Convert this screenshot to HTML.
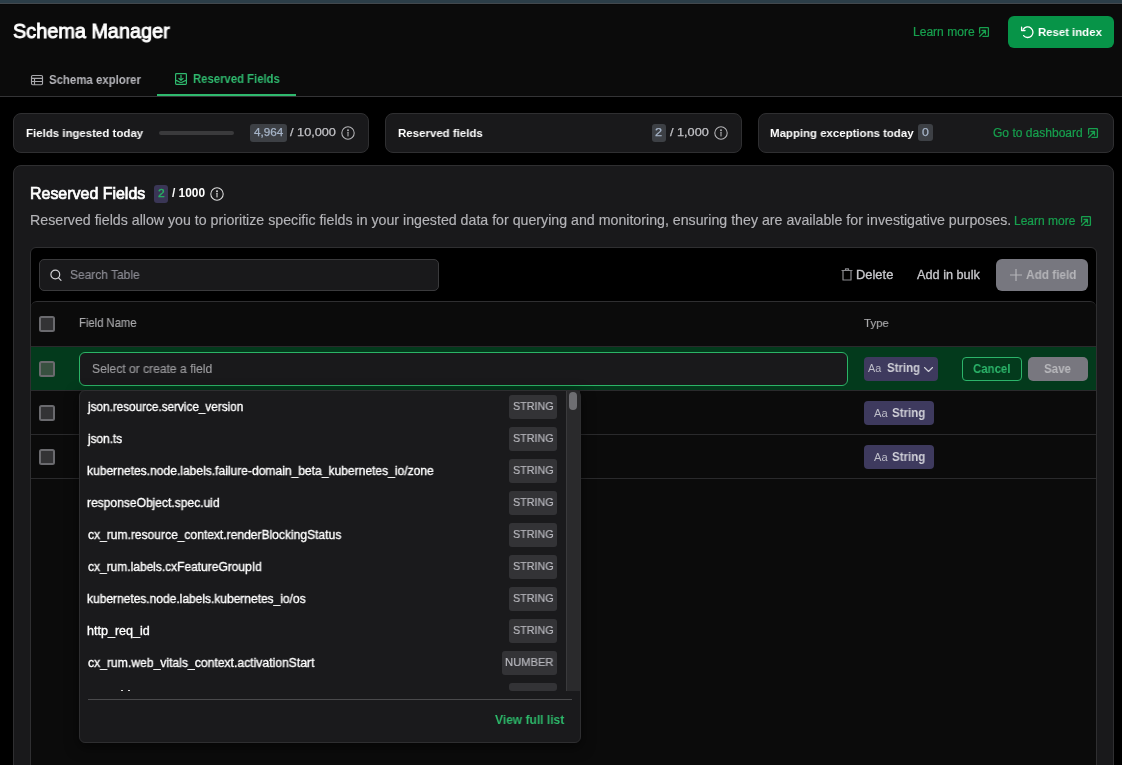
<!DOCTYPE html>
<html><head><meta charset="utf-8">
<style>
*{margin:0;padding:0;box-sizing:border-box}
html,body{width:1122px;height:765px;overflow:hidden;background:#000;font-family:"Liberation Sans",sans-serif}
.a{position:absolute}
.t{position:absolute;line-height:1;white-space:nowrap;transform-origin:0 0;will-change:transform}
svg{position:absolute;overflow:visible}
</style></head>
<body>
<div class="a" style="left:0px;top:0px;width:1122px;height:3px;background:#2c3e48;border-radius:0px;"></div>
<div class="a" style="left:0px;top:3px;width:1122px;height:1px;background:#42484d;border-radius:0px;"></div>
<div class="a" style="left:0px;top:4px;width:1122px;height:1px;background:#080808;border-radius:0px;"></div>
<div class="a" style="left:0px;top:5px;width:1122px;height:91px;background:#0b0b0b;border-radius:0px;"></div>
<div class="a" style="left:0px;top:96px;width:1122px;height:1px;background:#343436;border-radius:0px;"></div>
<div class="t" style="left:13.17px;top:19px;line-height:23px;font-size:20.70px;color:#fff;transform:scaleX(0.9592);-webkit-text-stroke:0.93px #fff;">Schema Manager</div>
<div class="t" style="left:912.54px;top:25px;line-height:14px;font-size:12.00px;color:#17a04e;transform:scaleX(1.0037);-webkit-text-stroke:0.2px #17a04e;">Learn more</div>
<svg style="left:979px;top:27px" width="10" height="10" viewBox="0 0 10 10" fill="none" stroke="#17a04e" stroke-width="1.3" stroke-linecap="round" stroke-linejoin="round"><path d="M0.6 6 V1.2 Q0.6 0.6 1.2 0.6 H8.8 Q9.4 0.6 9.4 1.2 V8.8 Q9.4 9.4 8.8 9.4 H4"/><path d="M0.8 9.2 L6.3 3.7 M3 3.5 H6.5 V7"/></svg>
<div class="a" style="left:1008px;top:16px;width:106px;height:32px;background:#079448;border-radius:6px;"></div>
<svg style="left:1021px;top:26px" width="14" height="13" viewBox="0 0 14 13" fill="none" stroke="#fff" stroke-width="1.3" stroke-linecap="round" stroke-linejoin="round"><path d="M2.3 3.2 A5.3 5.3 0 1 1 2.6 9.6"/><path d="M0.6 1.2 V4.5 H4"/></svg>
<div class="t" style="left:1037.86px;top:25px;line-height:13px;font-size:11.60px;font-weight:bold;color:#fff;transform:scaleX(0.9803);">Reset index</div>
<svg style="left:31px;top:75px" width="12" height="10" viewBox="0 0 12 10" fill="none" stroke="#a8a8ac" stroke-width="1.15"><rect x="0.5" y="0.5" width="11" height="9.2" rx="1.2"/><path d="M0.5 3.3 H11.5 M0.5 6.5 H11.5 M3.5 3.3 V9.7"/></svg>
<div class="t" style="left:48.96px;top:73px;line-height:14px;font-size:11.90px;font-weight:bold;color:#b5b5ba;transform:scaleX(0.9593);">Schema explorer</div>
<svg style="left:175px;top:73px" width="12" height="12" viewBox="0 0 12 12" fill="none" stroke="#2fb96e" stroke-width="1.2" stroke-linecap="round" stroke-linejoin="round"><rect x="0.6" y="0.6" width="10.8" height="10.8" rx="0.8"/><path d="M6 2.3 V7.3 M3.9 5.3 L6 7.4 L8.1 5.3"/><path d="M0.6 7.3 C2.6 7.3 3.6 9.5 6 9.5 C8.4 9.5 9.4 7.3 11.4 7.3"/></svg>
<div class="t" style="left:192.86px;top:72px;line-height:14px;font-size:11.90px;font-weight:bold;color:#2fb96e;transform:scaleX(0.9520);">Reserved Fields</div>
<div class="a" style="left:157px;top:94px;width:139px;height:2px;background:#2fb96e;border-radius:0px;"></div>
<div class="a" style="left:13px;top:113px;width:356px;height:40px;background:#19191b;border:1px solid #2f2f31;border-radius:8px;"></div>
<div class="a" style="left:385px;top:113px;width:357px;height:40px;background:#19191b;border:1px solid #2f2f31;border-radius:8px;"></div>
<div class="a" style="left:758px;top:113px;width:356px;height:40px;background:#19191b;border:1px solid #2f2f31;border-radius:8px;"></div>
<div class="t" style="left:25.75px;top:126px;line-height:13px;font-size:11.60px;font-weight:bold;color:#fff;transform:scaleX(0.9881);">Fields ingested today</div>
<div class="a" style="left:159px;top:131px;width:75px;height:4px;background:#3a3a3c;border-radius:2px;"></div>
<div class="a" style="left:250px;top:124.3px;width:37px;height:17.4px;background:#3d4045;border-radius:3px;"></div>
<div class="t" style="left:253.67px;top:126px;line-height:12px;font-size:11.30px;color:#a6b4c8;transform:scaleX(1.0367);-webkit-text-stroke:0.25px #a6b4c8;">4,964</div>
<div class="t" style="left:290.20px;top:126px;line-height:12px;font-size:11.50px;color:#c2c2c6;transform:scaleX(1.1052);-webkit-text-stroke:0.25px #c2c2c6;">/ 10,000</div>
<svg style="left:341.2px;top:125.69999999999999px" width="14" height="14" viewBox="0 0 14 14" fill="none" stroke="#b5b5b8" stroke-width="1.05" stroke-linecap="round"><circle cx="7" cy="7" r="6.2"/><path d="M7 6.3 V10"/><circle cx="7" cy="4.2" r="0.4" fill="#b5b5b8"/></svg>
<div class="t" style="left:397.85px;top:126px;line-height:13px;font-size:11.60px;font-weight:bold;color:#fff;transform:scaleX(0.9893);">Reserved fields</div>
<div class="a" style="left:652.3px;top:124.2px;width:13.5px;height:17.6px;background:#3d4045;border-radius:3px;"></div>
<div class="t" style="left:655.36px;top:126px;line-height:12px;font-size:11.30px;color:#a6b4c8;transform:scaleX(1.1281);-webkit-text-stroke:0.25px #a6b4c8;">2</div>
<div class="t" style="left:669.90px;top:126px;line-height:12px;font-size:11.50px;color:#c2c2c6;transform:scaleX(1.1028);-webkit-text-stroke:0.25px #c2c2c6;">/ 1,000</div>
<svg style="left:713.9px;top:126px" width="14" height="14" viewBox="0 0 14 14" fill="none" stroke="#b5b5b8" stroke-width="1.05" stroke-linecap="round"><circle cx="7" cy="7" r="6.2"/><path d="M7 6.3 V10"/><circle cx="7" cy="4.2" r="0.4" fill="#b5b5b8"/></svg>
<div class="t" style="left:770.46px;top:126px;line-height:13px;font-size:11.60px;font-weight:bold;color:#fff;transform:scaleX(0.9860);">Mapping exceptions today</div>
<div class="a" style="left:918.2px;top:124.4px;width:14.8px;height:17px;background:#3d4045;border-radius:3px;"></div>
<div class="t" style="left:922.11px;top:126px;line-height:12px;font-size:11.30px;color:#a6b4c8;transform:scaleX(1.0878);-webkit-text-stroke:0.25px #a6b4c8;">0</div>
<div class="t" style="left:993.30px;top:126px;line-height:14px;font-size:12.00px;color:#17a04e;transform:scaleX(1.0043);-webkit-text-stroke:0.2px #17a04e;">Go to dashboard</div>
<svg style="left:1088px;top:128px" width="10" height="10" viewBox="0 0 10 10" fill="none" stroke="#17a04e" stroke-width="1.3" stroke-linecap="round" stroke-linejoin="round"><path d="M0.6 6 V1.2 Q0.6 0.6 1.2 0.6 H8.8 Q9.4 0.6 9.4 1.2 V8.8 Q9.4 9.4 8.8 9.4 H4"/><path d="M0.8 9.2 L6.3 3.7 M3 3.5 H6.5 V7"/></svg>
<div class="a" style="left:13px;top:165px;width:1101px;height:640px;background:#19191b;border:1px solid #2f2f31;border-radius:8px;"></div>
<div class="t" style="left:29.88px;top:185px;line-height:17px;font-size:15.90px;color:#fff;transform:scaleX(1.0039);-webkit-text-stroke:0.72px #fff;">Reserved Fields</div>
<div class="a" style="left:154.2px;top:185.1px;width:13.7px;height:17.7px;background:#3a3656;border-radius:3px;"></div>
<div class="t" style="left:157.80px;top:187px;line-height:12px;font-size:11.00px;color:#27b563;transform:scaleX(1.0989);-webkit-text-stroke:0.3px #27b563;">2</div>
<div class="t" style="left:171.98px;top:186px;line-height:14px;font-size:11.90px;font-weight:bold;color:#fff;">/ 1000</div>
<svg style="left:209.8px;top:187.3px" width="14" height="14" viewBox="0 0 14 14" fill="none" stroke="#e0e0e0" stroke-width="1.05" stroke-linecap="round"><circle cx="7" cy="7" r="6.2"/><path d="M7 6.3 V10"/><circle cx="7" cy="4.2" r="0.4" fill="#e0e0e0"/></svg>
<div class="t" style="left:30.06px;top:212px;line-height:16px;font-size:14.10px;color:#b4b4b8;transform:scaleX(1.0068);-webkit-text-stroke:0.15px #b4b4b8;">Reserved fields allow you to prioritize specific fields in your ingested data for querying and monitoring, ensuring they are available for investigative purposes.</div>
<div class="t" style="left:1014.04px;top:214px;line-height:14px;font-size:12.00px;color:#17a04e;-webkit-text-stroke:0.2px #17a04e;">Learn more</div>
<svg style="left:1081px;top:215.5px" width="10" height="10" viewBox="0 0 10 10" fill="none" stroke="#17a04e" stroke-width="1.3" stroke-linecap="round" stroke-linejoin="round"><path d="M0.6 6 V1.2 Q0.6 0.6 1.2 0.6 H8.8 Q9.4 0.6 9.4 1.2 V8.8 Q9.4 9.4 8.8 9.4 H4"/><path d="M0.8 9.2 L6.3 3.7 M3 3.5 H6.5 V7"/></svg>
<div class="a" style="left:30px;top:247px;width:1067px;height:560px;background:#000;border:1px solid #2f2f31;border-radius:6px;"></div>
<div class="a" style="left:38.8px;top:258.8px;width:400px;height:32.4px;background:#19191b;border:1px solid #3a3a3c;border-radius:5px;"></div>
<svg style="left:50px;top:269px" width="12" height="12" viewBox="0 0 12 12" fill="none" stroke="#d0d0d4" stroke-width="1.2" stroke-linecap="round"><circle cx="5.3" cy="5.5" r="4.4"/><path d="M8.6 8.8 L11 11.3"/></svg>
<div class="t" style="left:69.76px;top:268px;line-height:14px;font-size:12.40px;color:#8c8c94;transform:scaleX(0.9655);-webkit-text-stroke:0.15px #8c8c94;">Search Table</div>
<svg style="left:841px;top:268px" width="12" height="13" viewBox="0 0 12 13" fill="none" stroke="#8a8a8e" stroke-width="1.2" stroke-linejoin="round"><path d="M0.5 2.5 H11.5 M2 2.5 V12 H10 V2.5 M4.5 2.5 V0.8 H7.5 V2.5"/></svg>
<div class="t" style="left:856.07px;top:268px;line-height:14px;font-size:12.10px;color:#c8c8cc;transform:scaleX(1.0671);-webkit-text-stroke:0.3px #c8c8cc;">Delete</div>
<div class="t" style="left:917.10px;top:268px;line-height:14px;font-size:12.10px;color:#c8c8cc;transform:scaleX(1.0502);-webkit-text-stroke:0.3px #c8c8cc;">Add in bulk</div>
<div class="a" style="left:996px;top:259px;width:91.5px;height:32px;background:#77777f;border-radius:6px;"></div>
<svg style="left:1010px;top:269px" width="12" height="12" viewBox="0 0 12 12" fill="none" stroke="#b4b4b8" stroke-width="1.2"><path d="M6 0 V12 M0 6 H12"/></svg>
<div class="t" style="left:1025.70px;top:268px;line-height:14px;font-size:12.30px;font-weight:bold;color:#b4b4b8;transform:scaleX(0.9597);">Add field</div>
<div class="a" style="left:31px;top:301px;width:1065px;height:506px;background:#0b0b0b;border-radius:0px;border-top:1px solid #2f2f31;border-top-left-radius:6px;border-top-right-radius:6px"></div>
<div class="a" style="left:31px;top:347px;width:1065px;height:43px;background:#033a1c;border-radius:0px;"></div>
<div class="a" style="left:31px;top:346px;width:1065px;height:1px;background:#2a2a2c;border-radius:0px;"></div>
<div class="a" style="left:31px;top:390px;width:1065px;height:1px;background:#2a2a2c;border-radius:0px;"></div>
<div class="a" style="left:31px;top:434px;width:1065px;height:1px;background:#2a2a2c;border-radius:0px;"></div>
<div class="a" style="left:31px;top:478px;width:1065px;height:1px;background:#2a2a2c;border-radius:0px;"></div>
<div class="t" style="left:78.50px;top:316px;line-height:14px;font-size:11.90px;color:#a9a9ab;transform:scaleX(0.9457);-webkit-text-stroke:0.15px #a9a9ab;">Field Name</div>
<div class="t" style="left:863.77px;top:317px;line-height:12px;font-size:11.50px;color:#a9a9ab;transform:scaleX(0.9896);-webkit-text-stroke:0.15px #a9a9ab;">Type</div>
<div class="a" style="left:39px;top:316px;width:16px;height:16px;background:#333335;border:2px solid #6a6a6e;border-radius:2.5px;"></div>
<div class="a" style="left:39px;top:361.2px;width:16px;height:16px;background:#385040;border:2px solid #6a6a6e;border-radius:2.5px;"></div>
<div class="a" style="left:39px;top:405.1px;width:16px;height:16px;background:#333335;border:2px solid #6a6a6e;border-radius:2.5px;"></div>
<div class="a" style="left:39px;top:449.1px;width:16px;height:16px;background:#333335;border:2px solid #6a6a6e;border-radius:2.5px;"></div>
<div class="a" style="left:79px;top:352px;width:769px;height:34px;background:#19191b;border:1px solid #2bb466;border-radius:6px;"></div>
<div class="t" style="left:91.86px;top:362px;line-height:14px;font-size:12.20px;color:#9b9b9e;transform:scaleX(0.9913);-webkit-text-stroke:0.15px #9b9b9e;">Select or create a field</div>
<div class="a" style="left:864.2px;top:357.2px;width:73.8px;height:23.6px;background:#3e3a5e;border-radius:4px;"></div>
<div class="t" style="left:867.60px;top:362px;line-height:12px;font-size:10.60px;color:#bdbdc8;transform:scaleX(1.0207);">Aa</div>
<div class="t" style="left:886.56px;top:361px;line-height:14px;font-size:12.00px;font-weight:bold;color:#d0d0d8;transform:scaleX(0.9541);">String</div>
<svg style="left:923.5px;top:366.8px" width="9" height="5" viewBox="0 0 9 5" fill="none" stroke="#d0d0d8" stroke-width="1.1" stroke-linecap="round" stroke-linejoin="round"><path d="M0.5 0.5 L4.5 4.5 L8.5 0.5"/></svg>
<div class="a" style="left:962.1px;top:357.1px;width:59.9px;height:23.7px;background:none;border:1.2px solid #2cb46a;border-radius:4px;"></div>
<div class="t" style="left:973.24px;top:362px;line-height:14px;font-size:12.40px;font-weight:bold;color:#2cb46a;transform:scaleX(0.9209);">Cancel</div>
<div class="a" style="left:1028px;top:357.1px;width:59.6px;height:23.7px;background:#78777f;border-radius:5px;"></div>
<div class="t" style="left:1044.45px;top:362px;line-height:14px;font-size:12.40px;font-weight:bold;color:#b8b8bc;transform:scaleX(0.9308);">Save</div>
<div class="a" style="left:864.1px;top:401px;width:69.7px;height:23.9px;background:#3e3a5e;border-radius:4px;"></div>
<div class="t" style="left:873.50px;top:407px;line-height:12px;font-size:10.60px;color:#bdbdc8;transform:scaleX(1.0517);">Aa</div>
<div class="t" style="left:892.45px;top:406px;line-height:14px;font-size:12.00px;font-weight:bold;color:#d0d0d8;transform:scaleX(0.9600);">String</div>
<div class="a" style="left:864.1px;top:445px;width:69.7px;height:23.9px;background:#3e3a5e;border-radius:4px;"></div>
<div class="t" style="left:873.50px;top:451px;line-height:12px;font-size:10.60px;color:#bdbdc8;transform:scaleX(1.0517);">Aa</div>
<div class="t" style="left:892.45px;top:450px;line-height:14px;font-size:12.00px;font-weight:bold;color:#d0d0d8;transform:scaleX(0.9600);">String</div>
<div class="a" style="left:79.3px;top:390.4px;width:501.4px;height:352.3px;background:#1a1a1c;border:1px solid #2e2e30;border-radius:6px;box-shadow:0 4px 14px rgba(0,0,0,.55)"></div>
<div class="a" style="left:80px;top:391px;width:500px;height:300px;overflow:hidden"><div class="a" style="left:-80px;top:-391px;width:1122px;height:765px"><div class="t" style="left:88.29px;top:400px;line-height:14px;font-size:12.50px;color:#fff;transform:scaleX(0.9386);-webkit-text-stroke:0.35px #fff;">json.resource.service_version</div><div class="a" style="left:509.2px;top:395px;width:47.7px;height:23.7px;background:#333336;border-radius:3px;"></div><div class="t" style="left:512.72px;top:400px;line-height:12px;font-size:11.30px;color:#b8b8be;transform:scaleX(0.9502);-webkit-text-stroke:0.2px #b8b8be;">STRING</div><div class="t" style="left:88.29px;top:432px;line-height:14px;font-size:12.50px;color:#fff;transform:scaleX(0.9417);-webkit-text-stroke:0.35px #fff;">json.ts</div><div class="a" style="left:509.2px;top:427px;width:47.7px;height:23.7px;background:#333336;border-radius:3px;"></div><div class="t" style="left:512.72px;top:432px;line-height:12px;font-size:11.30px;color:#b8b8be;transform:scaleX(0.9502);-webkit-text-stroke:0.2px #b8b8be;">STRING</div><div class="t" style="left:87.22px;top:464px;line-height:14px;font-size:12.50px;color:#fff;transform:scaleX(0.9651);-webkit-text-stroke:0.35px #fff;">kubernetes.node.labels.failure-domain_beta_kubernetes_io/zone</div><div class="a" style="left:509.2px;top:459px;width:47.7px;height:23.7px;background:#333336;border-radius:3px;"></div><div class="t" style="left:512.72px;top:464px;line-height:12px;font-size:11.30px;color:#b8b8be;transform:scaleX(0.9502);-webkit-text-stroke:0.2px #b8b8be;">STRING</div><div class="t" style="left:87.22px;top:496px;line-height:14px;font-size:12.50px;color:#fff;transform:scaleX(0.9637);-webkit-text-stroke:0.35px #fff;">responseObject.spec.uid</div><div class="a" style="left:509.2px;top:491px;width:47.7px;height:23.7px;background:#333336;border-radius:3px;"></div><div class="t" style="left:512.72px;top:496px;line-height:12px;font-size:11.30px;color:#b8b8be;transform:scaleX(0.9502);-webkit-text-stroke:0.2px #b8b8be;">STRING</div><div class="t" style="left:87.52px;top:528px;line-height:14px;font-size:12.50px;color:#fff;transform:scaleX(0.9641);-webkit-text-stroke:0.35px #fff;">cx_rum.resource_context.renderBlockingStatus</div><div class="a" style="left:509.2px;top:523px;width:47.7px;height:23.7px;background:#333336;border-radius:3px;"></div><div class="t" style="left:512.72px;top:528px;line-height:12px;font-size:11.30px;color:#b8b8be;transform:scaleX(0.9502);-webkit-text-stroke:0.2px #b8b8be;">STRING</div><div class="t" style="left:87.52px;top:560px;line-height:14px;font-size:12.50px;color:#fff;transform:scaleX(0.9578);-webkit-text-stroke:0.35px #fff;">cx_rum.labels.cxFeatureGroupId</div><div class="a" style="left:509.2px;top:555px;width:47.7px;height:23.7px;background:#333336;border-radius:3px;"></div><div class="t" style="left:512.72px;top:560px;line-height:12px;font-size:11.30px;color:#b8b8be;transform:scaleX(0.9502);-webkit-text-stroke:0.2px #b8b8be;">STRING</div><div class="t" style="left:87.22px;top:592px;line-height:14px;font-size:12.50px;color:#fff;transform:scaleX(0.9590);-webkit-text-stroke:0.35px #fff;">kubernetes.node.labels.kubernetes_io/os</div><div class="a" style="left:509.2px;top:587px;width:47.7px;height:23.7px;background:#333336;border-radius:3px;"></div><div class="t" style="left:512.72px;top:592px;line-height:12px;font-size:11.30px;color:#b8b8be;transform:scaleX(0.9502);-webkit-text-stroke:0.2px #b8b8be;">STRING</div><div class="t" style="left:87.12px;top:624px;line-height:14px;font-size:12.50px;color:#fff;transform:scaleX(1.0037);-webkit-text-stroke:0.35px #fff;">http_req_id</div><div class="a" style="left:509.2px;top:619px;width:47.7px;height:23.7px;background:#333336;border-radius:3px;"></div><div class="t" style="left:512.72px;top:624px;line-height:12px;font-size:11.30px;color:#b8b8be;transform:scaleX(0.9502);-webkit-text-stroke:0.2px #b8b8be;">STRING</div><div class="t" style="left:87.51px;top:656px;line-height:14px;font-size:12.50px;color:#fff;transform:scaleX(0.9728);-webkit-text-stroke:0.35px #fff;">cx_rum.web_vitals_context.activationStart</div><div class="a" style="left:502px;top:651px;width:55px;height:23.7px;background:#333336;border-radius:3px;"></div><div class="t" style="left:504.71px;top:656px;line-height:12px;font-size:11.30px;color:#b8b8be;transform:scaleX(0.9891);-webkit-text-stroke:0.2px #b8b8be;">NUMBER</div></div></div>
<div class="a" style="left:121px;top:690px;width:2px;height:1px;background:#d8d8d8;border-radius:0px;"></div>
<div class="a" style="left:128px;top:690px;width:2px;height:1px;background:#d8d8d8;border-radius:0px;"></div>
<div class="a" style="left:509.2px;top:683px;width:47.7px;height:8px;background:#333336;border-radius:3px;"></div>
<div class="a" style="left:565.5px;top:391px;width:14px;height:300px;background:#2a2a2c;border-radius:0px;border-left:1px solid #3a3a3c"></div>
<div class="a" style="left:569px;top:392px;width:8px;height:18px;background:#6e6e72;border-radius:4px;"></div>
<div class="a" style="left:88px;top:699px;width:484px;height:1px;background:#4a4a4c;border-radius:0px;"></div>
<div class="t" style="left:494.84px;top:713px;line-height:14px;font-size:12.40px;font-weight:bold;color:#2db86a;transform:scaleX(0.9700);">View full list</div>
</body></html>
